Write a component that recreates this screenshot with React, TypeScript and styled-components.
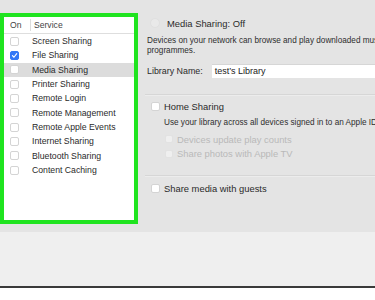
import styled, { createGlobalStyle } from 'styled-components'

const GlobalStyle = createGlobalStyle`
  body {
    margin: 0;
    background: #ffffff;
    font-family: "Liberation Sans", Arial, sans-serif;
    color: #2b2b2b;
  }
`

const services = [
  { name: 'Screen Sharing', on: false },
  { name: 'File Sharing', on: true },
  { name: 'Media Sharing', on: false, selected: true },
  { name: 'Printer Sharing', on: false },
  { name: 'Remote Login', on: false },
  { name: 'Remote Management', on: false },
  { name: 'Remote Apple Events', on: false },
  { name: 'Internet Sharing', on: false },
  { name: 'Bluetooth Sharing', on: false },
  { name: 'Content Caching', on: false },
]

const Window = styled.div`
  height: 286px;
  background: #efefef;
  border-bottom: 2px solid #3a3a3a;
`

const Main = styled.div`
  display: flex;
  height: 232px;
  box-sizing: border-box;
  padding-top: 13px;
  background: #e4e4e4;
`

const ServiceList = styled.div`
  width: 138px;
  height: 211px;
  flex-shrink: 0;
  box-sizing: border-box;
  border: 4px solid #1fe41f;
  background: #ffffff;
`

const ListHeader = styled.div`
  display: flex;
  align-items: center;
  height: 16px;
  border-bottom: 1px solid #dedede;
  font-size: 8.6px;
  color: #444;
`

const HeaderCell = styled.div<{ $width?: number }>`
  width: ${p => (p.$width ? `${p.$width}px` : 'auto')};
  padding-left: 6px;
  box-sizing: border-box;
  & + & {
    border-left: 1px solid #dcdcdc;
    padding-left: 3px;
    height: 12px;
    line-height: 12px;
  }
`

const ServiceRow = styled.div<{ $selected?: boolean }>`
  display: flex;
  align-items: center;
  height: 14.33px;
  padding-left: 6px;
  background: ${p => (p.$selected ? '#dcdcdc' : 'transparent')};
  font-size: 8.7px;
  color: #2a2a2a;
`

const ServiceName = styled.span`
  margin-left: 13px;
  white-space: nowrap;
`

const Box = styled.span<{ $checked?: boolean; $disabled?: boolean; $size?: number }>`
  display: inline-flex;
  align-items: center;
  justify-content: center;
  flex-shrink: 0;
  width: ${p => p.$size ?? 9}px;
  height: ${p => p.$size ?? 9}px;
  box-sizing: border-box;
  border-radius: 2px;
  border: 1px solid ${p => (p.$checked ? '#3478f6' : p.$disabled ? '#e2e2e2' : '#d4d4d4')};
  background: ${p => (p.$checked ? '#3478f6' : p.$disabled ? '#efefef' : '#ffffff')};
`

const Pane = styled.div`
  flex: 1;
  min-width: 0;
  overflow: hidden;
  padding-left: 9px;
`

const RadioRow = styled.div`
  display: flex;
  align-items: center;
  height: 18px;
  margin-top: 1px;
  padding-left: 3px;
  font-size: 9.4px;
  white-space: nowrap;
`

const Radio = styled.span`
  width: 8px;
  height: 8px;
  border-radius: 50%;
  background: #e9e9e9;
  border: 1px solid #e0e0e0;
  margin-right: 7px;
`

const Note = styled.p<{ $indent?: number; $top?: number }>`
  margin: ${p => p.$top ?? 4}px 0 0 ${p => p.$indent ?? 0}px;
  font-size: 8.2px;
  line-height: 10px;
  white-space: nowrap;
  color: #2e2e2e;
`

const FieldRow = styled.div`
  display: flex;
  align-items: center;
  height: 14px;
  margin-top: 8px;
  font-size: 8.9px;
  white-space: nowrap;
`

const Field = styled.div`
  flex: 1;
  height: 14px;
  margin-left: 9px;
  padding-left: 3px;
  box-sizing: border-box;
  background: #ffffff;
  border-top: 1px solid #d6d6d6;
  font-size: 9px;
  line-height: 13px;
  color: #222;
`

const Separator = styled.div<{ $top: number }>`
  height: 1px;
  margin: ${p => p.$top}px 0 0 -2px;
  background: #d6d6d6;
  box-shadow: 0 1px 0 #ececec;
`

const CheckRow = styled.div<{ $top: number; $indent?: number; $disabled?: boolean }>`
  display: flex;
  align-items: center;
  gap: 4px;
  height: ${p => (p.$disabled ? 14.5 : 12)}px;
  margin-top: ${p => p.$top}px;
  padding-left: ${p => p.$indent ?? 4}px;
  font-size: 9.4px;
  color: ${p => (p.$disabled ? '#b9b9b9' : '#2a2a2a')};
  white-space: nowrap;
`

const Check = () => (
  <svg width="7" height="7" viewBox="0 0 10 10">
    <path d="M2 5.3 L4.2 7.5 L8.2 2.4" fill="none" stroke="#fff" strokeWidth="1.6" strokeLinecap="round" strokeLinejoin="round" />
  </svg>
)

export default function App() {
  return (
    <>
      <GlobalStyle />
      <Window>
        <Main>
          <ServiceList>
            <ListHeader>
              <HeaderCell $width={26}>On</HeaderCell>
              <HeaderCell>Service</HeaderCell>
            </ListHeader>
            {services.map(s => (
              <ServiceRow key={s.name} $selected={s.selected}>
                <Box $checked={s.on}>{s.on && <Check />}</Box>
                <ServiceName>{s.name}</ServiceName>
              </ServiceRow>
            ))}
          </ServiceList>

          <Pane>
            <RadioRow>
              <Radio />
              Media Sharing: Off
            </RadioRow>
            <Note>
              Devices on your network can browse and play downloaded music, films and TV
              <br />
              programmes.
            </Note>
            <FieldRow>
              Library Name:
              <Field>test’s Library</Field>
            </FieldRow>
            <Separator $top={16} />
            <CheckRow $top={5}>
              <Box $size={9} />
              Home Sharing
            </CheckRow>
            <Note $indent={17} $top={6}>
              Use your library across all devices signed in to an Apple ID.
            </Note>
            <CheckRow $top={4} $indent={18} $disabled>
              <Box $size={8} $disabled />
              Devices update play counts
            </CheckRow>
            <CheckRow $top={0} $indent={18} $disabled>
              <Box $size={8} $disabled />
              Share photos with Apple TV
            </CheckRow>
            <Separator $top={14} />
            <CheckRow $top={6}>
              <Box $size={9} />
              Share media with guests
            </CheckRow>
          </Pane>
        </Main>
      </Window>
    </>
  )
}
